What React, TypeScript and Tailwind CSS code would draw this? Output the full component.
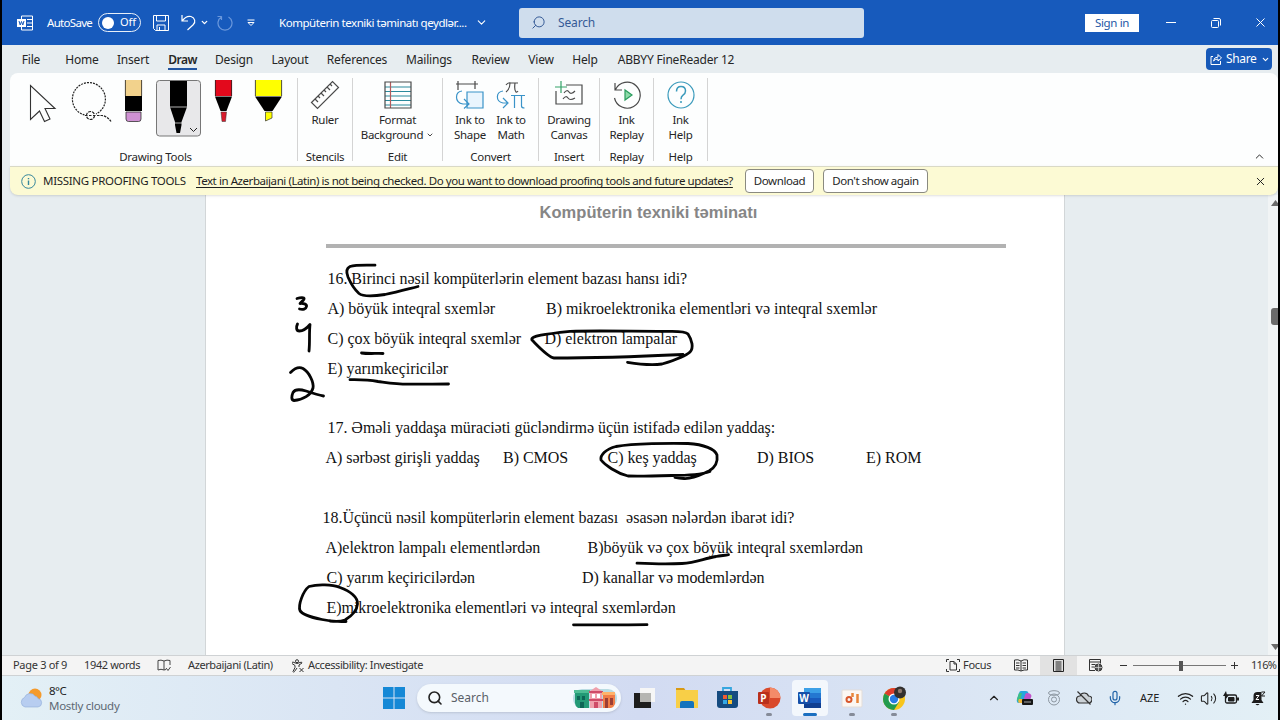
import type { ReactNode } from "react";
import { ChevronDown, ChevronUp, Mic, Search, Volume2, Wifi, X } from "lucide-react";

const TABS = [
  { label: "File", box: "w-[42px]" },
  { label: "Home", box: "w-[60px]" },
  { label: "Insert", box: "w-[42px]" },
  { label: "Draw", box: "w-[57px]", active: true },
  { label: "Design", box: "w-[46px]" },
  { label: "Layout", box: "w-[66px]" },
  { label: "References", box: "w-[68px]" },
  { label: "Mailings", box: "w-[76px]" },
  { label: "Review", box: "w-[47px]" },
  { label: "View", box: "w-[54px]" },
  { label: "Help", box: "w-[34px]" },
  { label: "ABBYY FineReader 12", box: "w-[148px]" },
];

// pen strokes, in window coordinates
const INK = [
  "M375 265.200C366 265 356 264.600 350 266.500C346 268.500 346 272 348 277C351 284 354 289 359 293.500C363 296.500 375 296 385 294.500C398 292 408 289 418 286.500",
  "M297 298.500C300 297.500 305 297 304 299C303 301 300 303 300 303.500C303 303 307 304 306.500 306.500C306 309 303 310 299.500 309",
  "M297.500 324C296 327 296 331 299.500 331C304 331 307 328 310 324.500C309 333 310 342 309 351",
  "M290.500 372.500C294 369 299 366.500 303 368.500C309 372 314 382 313 388C311 395 303 400 294 400.500C291 400 291.500 396 293 392.500C295 389 301 389.500 306 391C312 393 318 395 323.500 396",
  "M361.500 353C368 354 376 353.200 383 353.500",
  "M350 379.700C360 379.500 370 380 378 381.500C386 382.500 396 384.200 408 384.200C422 384.200 436 384.200 448.500 384",
  "M683 354.500C650 356 600 358 554 358C548 357 538 346 532 340C530 336 545 334 570 331.300C600 330.500 640 331.500 672 331.300C680 331.300 686 332 688 334C692 340 694 348 690 352C685 357 672 361 662 364C650 365.500 638 364 627.500 362.300",
  "M710 471.500C700 475 686 475.500 672 475.500C655 476 638 476.500 628 476C616 473 605 465 601 460C600 455 606 449 616 446.500C634 443.500 670 443 688 443.500C704 444.500 715 449 717 455C718 462 716 467 709 471C701 474.500 694 479 684 478.500C680 478.500 677 478 675 477.500",
  "M637 563.200C650 563.800 665 564.500 682 563.500C696 562.500 704 558.500 716 556.500C721 555.500 725 555.500 728.500 554.700",
  "M346 621.500C338 621.800 330 621.500 322 619.500C312 617.500 302 614.500 300 610.500C298 605 303 591 309 586.500C318 584 332 584.500 340 587.500C350 591 358 597 357.500 604C357 611 350 617 345 620C340 622 334 621.500 330 621",
  "M573.500 624.800C598 625.200 624 624.800 647 624.700",
];

function Group({ label, box, children }: { label: string; box: string; children: ReactNode }) {
  return (
    <div className={`${box} mt-[5px] flex h-[83px] shrink-0 flex-col border-r border-[#d4d4d4]`}>
      <div className="flex h-[70px] shrink-0 justify-center pt-[2px]">{children}</div>
      <div className="text-center text-[11.5px] leading-[17px] tracking-[-0.3px]">{label}</div>
    </div>
  );
}

function Tool({ lines, box, children }: { lines: string[]; box: string; children: ReactNode }) {
  return (
    <div className={`${box} flex flex-col items-center text-center text-[11.5px] leading-[15px] tracking-[-0.3px]`}>
      <svg width="30" height="30" viewBox="0 0 30 30" fill="none" stroke="#4a4a4a" strokeWidth="1.2" className="mb-[2px] shrink-0">
        {children}
      </svg>
      {lines.map((line) => (
        <div key={line} className="flex items-center whitespace-nowrap">
          {line}
          {line === "Background" && <ChevronDown size={8} strokeWidth={2.5} className="ml-[3px]" />}
        </div>
      ))}
    </div>
  );
}

function TitleBar() {
  return (
    <div className="flex h-[45px] shrink-0 items-center bg-[#175abc] text-white">
      <svg width="16" height="16" viewBox="0 0 16 16" fill="none" stroke="#fff" className="ml-[15px]">
        <path d="M4.500 4V1h11v14h-11v-3M10 4.500h5M10 8h5M10 11.500h5" />
        <path d="M0 4h9v8H0z" fill="#fff" stroke="none" />
        <path d="M2 6l1.200 4L4.500 6.500L5.800 10L7 6" stroke="#175abc" />
      </svg>
      <span className="ml-[14px] w-[51px] text-[11.5px] tracking-[-0.7px]">AutoSave</span>
      <div className="flex h-[19px] w-[43px] items-center rounded-full border border-white/90 pl-[3px]">
        <div className="h-3 w-3 rounded-full bg-white" />
        <span className="ml-[6px] text-[11px]">Off</span>
      </div>
      <svg width="16" height="16" viewBox="0 0 16 16" fill="none" stroke="#fff" className="ml-3">
        <path d="M.500.500h15v15h-13l-2-2zM3.500.500v5.500h9V.500M4 15.500V10h8v5.500M6.500 12v3.500" />
      </svg>
      <svg width="15" height="17" viewBox="0 0 15 17" fill="none" stroke="#fff" strokeWidth="1.200" className="ml-3">
        <path d="M1 1v6h6M1.200 6.800C4 3 7 1.800 10 2.500c4 1.200 5 5.500 2.200 8.200L6.500 16" />
      </svg>
      <ChevronDown size={9} className="ml-1" strokeWidth={3.500} />
      <svg width="16" height="16" viewBox="0 0 16 16" fill="none" stroke="#6b98dc" strokeWidth="1.200" className="ml-2">
        <path d="M4.500 1.500H.500M4.500 5V1.200M4.500 2A7 7 0 1 0 11.500 2" />
      </svg>
      <svg width="8" height="8" viewBox="0 0 8 8" fill="none" stroke="#fff" className="ml-[14px]">
        <path d="M.500 1h7M1 3.500l3 3l3-3z" />
      </svg>
      <span className="ml-6 w-[190px] whitespace-nowrap text-[11.5px] tracking-[-0.45px]">Kompüterin texniki təminatı qeydlər....</span>
      <ChevronDown size={13} className="ml-[6px]" strokeWidth={2} />
      <div className="ml-[31px] flex h-[30px] w-[345px] items-center rounded-[3px] bg-[#cfdded] text-[#355a96]">
        <Search size={15} strokeWidth={1.6} className="ml-3 -scale-x-100" />
        <span className="ml-3 text-[12px] tracking-[-0.15px]">Search</span>
      </div>
      <div className="ml-[221px] h-[18px] w-[54px] bg-white text-center text-[11.5px] leading-[18px] tracking-[-0.35px] text-[#2457a5]">Sign in</div>
      <div className="ml-[27px] h-px w-[10px] bg-white" />
      <svg width="10" height="10" viewBox="0 0 10 10" fill="none" stroke="#fff" className="ml-[35px]">
        <rect x=".5" y="2.500" width="7" height="7" rx="1" />
        <path d="M2.500.500H8Q9.500.500 9.500 2v5.500" />
      </svg>
      <X size={15} className="ml-[32px]" strokeWidth={1.600} />
    </div>
  );
}

function DrawingTools() {
  return (
    <svg width="286" height="66" viewBox="12 75 286 66" fill="none" className="shrink-0">
      <path d="M30.500 85.500v34l9-8.500l5 10.500l5.500-2.500l-5-10.500h10z" stroke="#333" strokeWidth="1.100" />
      <g stroke="#222" strokeWidth="1.200">
        <path d="M84.500 115a16.500 16.500 0 1 1 11.500 -1" strokeDasharray="2 1" />
        <circle cx="90.500" cy="115.500" r="4" strokeDasharray="3 1" />
        <path d="M85 115.500h3M89 115.500h3M93 115.500h3M97 115.500h5q5 .5 9 6" strokeDasharray="2.500 1" />
      </g>
      <path d="M125 80h17v16h-17z" fill="#f2d28c" />
      <path d="M125 96h17v15h-17z" fill="#000" />
      <path d="M126 112h15v7q0 2.500-2.500 2.500h-10q-2.500 0-2.500-2.500z" fill="#cf92d3" stroke="#333" strokeWidth=".8" />
      <path d="M125.400 80v16M141.600 80v16" stroke="#222" strokeWidth=".8" />
      <rect x="156.500" y="80.500" width="44" height="55.500" rx="3" fill="#e8e8ea" stroke="#777" />
      <path d="M170 81h17v26l-5.500 15v3l-1.500 8h-3.500l-1.500-8v-3L170 107z" fill="#000" />
      <path d="M170 107h17M175 123h7" stroke="#ddd" strokeWidth=".8" />
      <path d="M190 128l3.500 3.500l3.500-3.500" stroke="#222" />
      <path d="M215 80h17v16h-17z" fill="#e3091c" />
      <path d="M215 96.500h17L226.500 111h-6z" fill="#000" />
      <path d="M221 112h5.500l-1 9.500h-3.500z" fill="#d81b2c" stroke="#333" strokeWidth=".5" />
      <path d="M255.500 80h26v16h-26z" fill="#ff0" />
      <path d="M255 96.500h27l-9.500 14.500h-8z" fill="#000" />
      <path d="M265.500 112h6.500v6l-6.500 3z" fill="#ff0" stroke="#333" strokeWidth=".7" />
      <path d="M215.400 80v16M231.600 80v16M255.400 80v16M281.600 80v16" stroke="#222" strokeWidth=".8" />
    </svg>
  );
}

function Ribbon() {
  return (
    <div className="ml-2 flex h-[93px] shrink-0 rounded-t-lg bg-[#fdfefe]">
      <Group label="Drawing Tools" box="w-[288px] pl-[4px]">
        <div className="-mt-[5px] -ml-[4px] w-full"><DrawingTools /></div>
      </Group>
      <Group label="Stencils" box="w-[55px]">
        <Tool lines={["Ruler"]} box="w-[50px]">
          <path d="M1.500 22.500L22.500 1.500l6 6l-21 21z" />
          <path d="M5 19l3 3M8 16l2 2M11 13l3 3M14 10l2 2M17 7l3 3M20 4l2 2" />
        </Tool>
      </Group>
      <Group label="Edit" box="w-[90px]">
        <Tool lines={["Format", "Background"]} box="w-[86px]">
          <path d="M2 7h26M2 11.500h26M2 16h26M2 20.500h26M2 25h26" stroke="#2b8a9c" />
          <path d="M7.500 2v26" stroke="#b25b5b" />
          <path d="M2 2h26v26H2z" />
        </Tool>
      </Group>
      <Group label="Convert" box="w-[96px]">
        <Tool lines={["Ink to", "Shape"]} box="w-[41px]">
          <path d="M3 1v9M20 1v8M1 4h22" />
          <path d="M12 12h16v16H12z" fill="#eaf5fd" stroke="#3a93c8" />
          <path d="M7 11c-7 1-8 11 1 13h5M9 19l5 5l-5 4.500" stroke="#3a93c8" />
        </Tool>
        <Tool lines={["Ink to", "Math"]} box="w-[41px]">
          <path d="M10 5q2-3 5-2h7M14 3q0 6-4 9M19 3q-1 7 1 9q1 .5 2-1" />
          <path d="M15 15.500h14M18.500 15.500V28M25.500 15.500V26q0 2 3 2" stroke="#3a93c8" />
          <path d="M7 11c-7 1-8 10 0 12h4M7 18l5 5l-5 5" stroke="#3a93c8" />
        </Tool>
      </Group>
      <Group label="Insert" box="w-[61px]">
        <Tool lines={["Drawing", "Canvas"]} box="w-[50px]">
          <path d="M12 5h16v19H2V11" />
          <path d="M1 7h12M7 1v12" stroke="#35a268" />
          <path d="M10 13q3-4 5-1t6-1M9 19q3-4 5-1t7 0" />
        </Tool>
      </Group>
      <Group label="Replay" box="w-[54px]">
        <Tool lines={["Ink", "Replay"]} box="w-[45px]">
          <path d="M3 3v7h7M3.500 9.500A13 13 0 1 1 2.500 18" />
          <path d="M13 10v10l7-5z" fill="#8ddba9" stroke="#2a9c5d" />
        </Tool>
      </Group>
      <Group label="Help" box="w-[54px]">
        <Tool lines={["Ink", "Help"]} box="w-[45px]">
          <circle cx="15" cy="15" r="13" stroke="#3a9abb" />
          <path d="M10.500 11.500q0-5 4.500-5t4.500 4.500q0 2.500-2.500 4.200q-2 1.300-2 4M15 21v2" stroke="#3a9abb" strokeWidth="1.500" />
        </Tool>
      </Group>
      <div className="flex flex-1 items-end justify-end pr-3 pb-[3px]">
        <ChevronUp size={13} strokeWidth={1.800} />
      </div>
    </div>
  );
}

function MessageBar() {
  return (
    <div className="z-10 ml-2 flex h-[29px] shrink-0 items-center rounded-b-lg border-t border-[#d9d9c6] bg-[#fcfad4] text-[11.5px] text-[#1f1f1f] shadow-sm">
      <svg width="15" height="15" viewBox="0 0 15 15" fill="none" stroke="#35869c" className="ml-[11px]">
        <circle cx="7.500" cy="7.500" r="6.800" />
        <path d="M7.500 6.500V11M7.500 4v1.300" strokeWidth="1.400" />
      </svg>
      <span className="ml-[7px] w-[153px] whitespace-nowrap tracking-[-0.3px]">MISSING PROOFING TOOLS</span>
      <span className="w-[549px] whitespace-nowrap tracking-[-0.435px] underline underline-offset-2">
        Text in Azerbaijani (Latin) is not being checked. Do you want to download proofing tools and future updates?
      </span>
      <div className="h-6 w-[69px] shrink-0 rounded border border-[#8a8a80] bg-white text-center leading-[22px] tracking-[-0.4px]">Download</div>
      <div className="ml-[9px] h-6 w-[105px] rounded border border-[#8a8a80] bg-white text-center leading-[22px] tracking-[-0.45px]">Don't show again</div>
      <X size={13} strokeWidth={1.800} className="mr-[11px] ml-auto" />
    </div>
  );
}

function Row({ pad, children }: { pad: string; children: ReactNode }) {
  return <div className={`${pad} flex h-[30px] items-center whitespace-nowrap`}>{children}</div>;
}

function Document() {
  return (
    <div className="relative flex h-[460px] shrink-0 overflow-hidden">
      <div className="w-[203px] shrink-0" />
      <div className="w-[860px] shrink-0 border-x border-[#d2d6d8] bg-white font-['Liberation_Serif',serif] text-[16px] tracking-[-0.035px] text-[#111]">
        <div className="flex h-[49px] justify-center pt-[6px] pl-[27px] font-['Liberation_Sans',sans-serif] text-[16.5px] leading-[22px] font-bold tracking-[0.02px] text-[#868686]">
          Kompüterin texniki təminatı
        </div>
        <div className="ml-[120px] h-[4px] w-[680px] bg-[#b2b2b2]" />
        <div className="pt-[16px]">
          <Row pad="pl-[121.5px]">16. Birinci nəsil kompüterlərin element bazası hansı idi?</Row>
          <Row pad="pl-[121.5px]">
            <span className="w-[218.5px]">A) böyük inteqral sxemlər</span>
            <span>B) mikroelektronika elementləri və inteqral sxemlər</span>
          </Row>
          <Row pad="pl-[121.5px]">
            <span className="w-[217px]">C) çox böyük inteqral sxemlər</span>
            <span>D) elektron lampalar</span>
          </Row>
          <Row pad="pl-[121.5px]">E) yarımkeçiricilər</Row>
        </div>
        <div className="pt-[29px]">
          <Row pad="pl-[121.5px]">17. Əməli yaddaşa müraciəti gücləndirmə üçün istifadə edilən yaddaş:</Row>
          <Row pad="pl-[119.5px]">
            <span className="w-[177.5px]">A) sərbəst girişli yaddaş</span>
            <span className="w-[104.5px]">B) CMOS</span>
            <span className="w-[149.5px]">C) keş yaddaş</span>
            <span className="w-[109px]">D) BIOS</span>
            <span>E) ROM</span>
          </Row>
        </div>
        <div className="pt-[30px]">
          <Row pad="pl-[116.5px]">18.Üçüncü nəsil kompüterlərin element bazası &nbsp;əsasən nələrdən ibarət idi?</Row>
          <Row pad="pl-[119.5px]">
            <span className="w-[262px]">A)elektron lampalı elementlərdən</span>
            <span>B)böyük və çox böyük inteqral sxemlərdən</span>
          </Row>
          <Row pad="pl-[120.5px]">
            <span className="w-[255.5px]">C) yarım keçiricilərdən</span>
            <span>D) kanallar və modemlərdən</span>
          </Row>
          <Row pad="pl-[120.5px]">E)mikroelektronika elementləri və inteqral sxemlərdən</Row>
        </div>
      </div>
      <svg viewBox="2 195 1276 460" className="absolute inset-0 h-[460px] w-[1276px]" fill="none" stroke="#050505" strokeWidth="2.800" strokeLinecap="round" strokeLinejoin="round">
        {INK.map((d) => <path key={d} d={d} />)}
      </svg>
      <div className="relative ml-auto w-[10px] bg-[#f1f4f5]">
        <svg width="10" height="460" viewBox="0 0 10 460" fill="#6b6b6b">
          <path d="M3 11l4.500-6l4.500 6zM3 449l4.500 6l4.500-6z" />
          <rect x="3" y="113" width="9" height="17" rx="3" />
        </svg>
      </div>
    </div>
  );
}

function StatusBar() {
  return (
    <div className="flex h-[21px] shrink-0 items-center border-y border-[#cfd2d4] bg-[#f4f4f4] text-[11px] whitespace-nowrap text-[#333]">
      <span className="ml-[11px] w-[71px] tracking-[-0.3px]">Page 3 of 9</span>
      <span className="w-[73px] tracking-[-0.35px]">1942 words</span>
      <svg width="14" height="13" viewBox="0 0 14 13" fill="none" stroke="#444">
        <path d="M7 2v9M7 11Q4 9.500 1 11V1.500Q4 .5 7 2Q10 .5 13 1.500V6M7 11l2-.5M9 9l2 2.500L13.500 8" />
      </svg>
      <span className="ml-[17px] w-[103px] tracking-[-0.4px]">Azerbaijani (Latin)</span>
      <svg width="14" height="14" viewBox="0 0 14 14" fill="none" stroke="#333">
        <circle cx="6" cy="2.200" r="1.500" />
        <path d="M1 3.500q1-1 2 0l3 1l3-1q2-1 2 .5l-3 2v2M1 4.500l3 2v2l-2 4q.5 1.500 1.500 0L6 9M8.500 9l4 4M12.500 9l-4 4" />
      </svg>
      <span className="ml-[3px] tracking-[-0.4px]">Accessibility: Investigate</span>
      <div className="ml-auto flex h-full items-center">
        <svg width="14" height="13" viewBox="0 0 14 13" fill="none" stroke="#333">
          <path d="M.5 3V.5H3M11 .5h2.500V3M.5 10v2.500H3M11 12.500h2.500V10M4 2.500h4l2.500 2.500v6H4zM8 2.500V5h2.500" />
        </svg>
        <span className="ml-[3px] w-[46px] tracking-[-0.3px]">Focus</span>
        <svg width="14" height="13" viewBox="0 0 14 13" fill="none" stroke="#333" className="mx-[5px]">
          <path d="M7 2v10M7 2Q4 0 .5 1v10Q4 10.500 7 12Q10 10.500 13.500 11V1Q10 0 7 2M2 4h3.500M2 6.500h3.500M2 9h3.500M8.500 4H12M8.500 6.500H12M8.500 9H12" />
        </svg>
        <div className="ml-[7px] flex h-full w-[37px] items-center justify-center bg-[#e2e2e2]">
          <svg width="11" height="13" viewBox="0 0 11 13" fill="none" stroke="#222">
            <path d="M.5.5h10v12H.5zM2.500 3h6M2.500 5h6M2.500 7h6M2.500 9h6M2.500 11h6" />
          </svg>
        </div>
        <svg width="14" height="13" viewBox="0 0 14 13" fill="none" stroke="#333" className="ml-3">
          <path d="M6 11.500H.5V.5h11v4M.5 3h11M2.500 5.500h4M2.500 8h3" />
          <circle cx="9.500" cy="8.500" r="3.500" fill="#555" />
          <path d="M6 8.500h7M9.500 5v7" stroke="#ddd" strokeWidth=".7" />
        </svg>
        <div className="ml-[17px] h-px w-[7px] bg-[#333]" />
        <div className="relative ml-[6px] flex h-[12px] w-[93px] items-center">
          <div className="h-px w-full bg-[#777]" />
          <div className="absolute left-[46px] h-[10px] w-[4px] bg-[#555]" />
        </div>
        <svg width="7" height="7" viewBox="0 0 7 7" stroke="#333" className="ml-[5px]">
          <path d="M0 3.500h7M3.500 0v7" />
        </svg>
        <span className="mr-[2px] ml-[13px] w-[25px] tracking-[-0.7px]">116%</span>
      </div>
    </div>
  );
}

function TaskIcon({ box, dot, children }: { box: string; dot?: string; children: ReactNode }) {
  return (
    <div className={`${box} flex h-[36px] flex-col items-center justify-between rounded pt-[6px]`}>
      <svg width="24" height="24" viewBox="0 0 24 24">{children}</svg>
      <div className={`h-[3px] rounded-full ${dot ?? ""}`} />
    </div>
  );
}

function Taskbar() {
  return (
    <div className="flex h-[44px] shrink-0 items-center bg-linear-to-r from-[#e3f0f6] via-[#d2dbf2] to-[#e3f0f6] text-[11.5px] text-[#222]">
      <svg width="24" height="22" viewBox="0 0 24 22" className="ml-[17px]">
        <circle cx="16" cy="8" r="6.500" fill="#f49a2c" />
        <path d="M6 20a5 5 0 0 1-.5-9.500A6 6 0 0 1 16 9a4 4 0 0 1 3 2.500a4.300 4.300 0 0 1 0 8.500z" fill="#b7cdf0" stroke="#91add8" strokeWidth=".6" />
      </svg>
      <div className="ml-[6px] w-[334px] text-[11.5px] leading-[15px]">
        <div className="tracking-[-0.5px]">8°C</div>
        <div className="tracking-[-0.3px] text-[#5d6873]">Mostly cloudy</div>
      </div>
      <svg width="22" height="22" viewBox="0 0 22 22" fill="#1588d6">
        <path d="M0 0h10.500v10.500H0zM11.500 0H22v10.500H11.500zM0 11.500h10.500V22H0zM11.500 11.500H22V22H11.500z" />
      </svg>
      <div className="ml-[12px] flex h-[28px] w-[204px] items-center rounded-full bg-[#f4f9fd] shadow-sm">
        <Search size={16} strokeWidth={2.400} className="ml-[10px]" />
        <span className="ml-2 flex-1 text-[12px] text-[#5a6068]">Search</span>
        <svg width="44" height="24" viewBox="0 0 44 24" className="mr-[4px]">
          <rect x="0" y="3" width="44" height="19" rx="9" fill="#b9dce3" />
          <path d="M2 5h14v17H5q-3-2-3-5z" fill="#239a76" />
          <path d="M1 4h16v3H1z" fill="#4fbd95" />
          <path d="M4 10h3v4H4zM9 10h3v4H9zM7 16h4v6H7z" fill="#0d6656" />
          <path d="M17 5l6-4l6 4v17H17z" fill="#f0a0ac" />
          <path d="M16 5h14v2H16zM16 13h14v2H16zM21 16h4v6h-4z" fill="#cf4b67" />
          <path d="M19 8h3v4h-3zM24 8h3v4h-3z" fill="#fff" />
          <path d="M30 7h12v11q-1 3-4 4h-8z" fill="#f17e48" />
          <path d="M29 6h13v3H29z" fill="#ffb36b" />
          <path d="M32 12h3v10h-3zM37 12h3v7h-3z" fill="#9b3f35" />
        </svg>
      </div>
      <TaskIcon box="ml-[4px] w-[38px]">
        <path d="M8 2h15v14H8z" fill="#f6f6f6" />
        <path d="M2 7h17v15H2z" fill="#1d1d1d" />
        <path d="M8 7h11v9H8z" fill="#b5b5b2" />
      </TaskIcon>
      <TaskIcon box="ml-[5px] w-[38px]">
        <path d="M1 2h8l2 3H1z" fill="#d99a13" />
        <path d="M1 4h22v18H1z" fill="#f8cf47" />
        <path d="M5 22v-5q0-2 2-2h10q2 0 2 2v5z" fill="#1573bd" />
      </TaskIcon>
      <TaskIcon box="ml-[2px] w-[38px]">
        <path d="M8 6V2h8v4" fill="none" stroke="#36a6df" strokeWidth="1.800" />
        <path d="M2 5h21v14q0 3-3 3H5q-3 0-3-3z" fill="#154b80" />
        <path d="M8 9h4v4H8z" fill="#ef5b32" />
        <path d="M13 9h4v4h-4z" fill="#80c142" />
        <path d="M8 14h4v4H8z" fill="#33a8e5" />
        <path d="M13 14h4v4h-4z" fill="#fcc12d" />
      </TaskIcon>
      <TaskIcon box="ml-[4px] w-[38px]" dot="w-[6px] bg-[#858b98]">
        <circle cx="13" cy="12" r="10.500" fill="#d9492b" />
        <path d="M13 1.500a10.500 10.500 0 0 1 10.500 10.500H13z" fill="#f48b69" />
        <rect x="1" y="6" width="11" height="12" rx="1" fill="#b92f1c" />
        <text x="6.500" y="15.500" textAnchor="middle" fill="#fff" className="font-['Open_Sans',sans-serif] text-[10px] font-bold">P</text>
      </TaskIcon>
      <TaskIcon box="ml-[4px] w-[36px] bg-[#f3f7fc]" dot="w-[14px] bg-[#1b6fc0]">
        <path d="M6 2h17v5H6z" fill="#3ca0e7" />
        <path d="M6 7h17v5H6z" fill="#2478d1" />
        <path d="M6 12h17v5H6z" fill="#195bbd" />
        <path d="M6 17h17v5H6z" fill="#103f91" />
        <rect x="0" y="6" width="12" height="12" rx="1" fill="#1650a8" />
        <text x="6" y="15.500" textAnchor="middle" fill="#fff" className="font-['Open_Sans',sans-serif] text-[10px] font-bold">W</text>
      </TaskIcon>
      <TaskIcon box="ml-[6px] w-[36px]" dot="w-[6px] bg-[#858b98]">
        <rect x="2" y="4" width="20" height="17" rx="1" fill="#fbf7f3" stroke="#e3ddd9" />
        <circle cx="9" cy="13.500" r="2.500" fill="none" stroke="#d8572c" strokeWidth="2" />
        <path d="M12.500 7v4M17.500 8v9" stroke="#e8853a" strokeWidth="2.500" fill="none" />
      </TaskIcon>
      <TaskIcon box="ml-[6px] w-[36px]" dot="w-[6px] bg-[#858b98]">
        <circle cx="12" cy="13" r="11" fill="#f8c51c" />
        <path d="M12 13L2.500 7.500A11 11 0 0 1 21.500 7.500z" fill="#dc3c2d" />
        <path d="M12 13L2.500 7.500A11 11 0 0 0 12 24l5-8z" fill="#229b4f" />
        <circle cx="12" cy="13" r="5.500" fill="#fff" />
        <circle cx="12" cy="13" r="4.200" fill="#287ce6" />
        <circle cx="18" cy="6.500" r="6" fill="#33302e" />
        <circle cx="18" cy="5" r="2.200" fill="#8c776c" />
      </TaskIcon>
      <div className="mr-[12px] ml-auto flex items-center">
        <ChevronUp size={14} strokeWidth={2} />
        <svg width="17" height="16" viewBox="0 0 17 16" className="ml-[15px]">
          <path d="M5 1h5q2 0 2.500 2L10 10q-1 3-3 3H3q-3 0-2-4l2-6q.5-2 2-2z" fill="#27a7dc" />
          <path d="M1 9l2-6h3L4 12q-3 0-3-3z" fill="#3fbf84" />
          <path d="M11 3q4 0 4.500 3l-2 6H7l2-7q.5-2 2-2z" fill="#c153ca" />
          <path d="M3 9h5l-1 4H4q-3 0-1-4z" fill="#f2b73b" />
          <rect x="6" y="9" width="11" height="6" rx="1" fill="#171717" />
          <path d="M8 12h7" stroke="#aaa" />
        </svg>
        <svg width="14" height="16" viewBox="0 0 14 16" fill="none" stroke="#8c96a0" className="ml-[14px]">
          <ellipse cx="7" cy="3" rx="5.500" ry="2.300" />
          <circle cx="7" cy="9.500" r="5.500" />
          <circle cx="7" cy="9.500" r="2.500" />
        </svg>
        <svg width="16" height="14" viewBox="0 0 16 14" fill="none" stroke="#333" strokeWidth="1.200" className="ml-[15px]">
          <path d="M4 12a3.500 3.500 0 0 1 0-7a4.500 4.500 0 0 1 8.500 0a3.500 3.500 0 0 1 0 7zM1.500.5l13 13" fill="#cbd1d6" />
        </svg>
        <Mic size={16} strokeWidth={1.800} className="ml-[15px] text-[#2264a8]" />
        <span className="ml-[17px] w-[37px] text-[11px]">AZE</span>
        <Wifi size={17} strokeWidth={1.800} />
        <Volume2 size={17} strokeWidth={1.500} className="ml-[6px]" />
        <svg width="17" height="14" viewBox="0 0 17 14" fill="none" stroke="#1d1d1d" className="ml-[6px]">
          <rect x="2.500" y="4" width="11" height="8" rx="1.500" strokeWidth="1.300" />
          <path d="M5.500 6.500h5.500v3.500H5.500z" fill="#1d1d1d" />
          <path d="M15 6.500v3" strokeWidth="2" />
          <path d="M3 0L0 5h2v4l4-5H4z" fill="#1d1d1d" stroke="none" />
        </svg>
        <svg width="15" height="15" viewBox="0 0 15 15" className="ml-[11px]">
          <path d="M6.500 1q-4 0-4 4v4L.500 12h12l-2-3V1zM4.500 13h4q-2 2.500-4 0z" fill="#1d1d1d" />
          <path d="M10.500 1h3.500l-3.500 4h3.500" fill="none" stroke="#1d1d1d" />
          <path d="M5 4.500h3l-3 4h3" fill="none" stroke="#fff" />
        </svg>
      </div>
    </div>
  );
}

export default function App() {
  return (
    <div className="flex h-[720px] w-[1280px] flex-col overflow-hidden border-x-2 border-black bg-[#e7edf0] font-['Noto_Sans','Open_Sans',sans-serif] text-[#262626]">
      <TitleBar />
      <div className="flex h-[28px] shrink-0 items-center pt-px pl-2 text-[12px] tracking-[-0.2px]">
        {TABS.map((tab) => (
          <div key={tab.label} className={`${tab.box} flex shrink-0 justify-center whitespace-nowrap`}>
            <span className={tab.active ? "relative font-semibold tracking-[-0.5px] after:absolute after:inset-x-0 after:-bottom-px after:h-[2px] after:bg-[#2356a0]" : ""}>
              {tab.label}
            </span>
          </div>
        ))}
        <div className="-mt-px mr-[6px] ml-auto flex h-[22px] w-[66px] items-center rounded bg-[#1759b8] pl-1 text-white">
          <svg width="12" height="12" viewBox="0 0 12 12" fill="none" stroke="#fff">
            <path d="M3 3.500H1v8h9.500V8M3.500 8Q4 4 8 4V1.500L11.500 5L8 8V6Q5 6 3.500 8z" />
          </svg>
          <span className="ml-[4px] w-[35px] tracking-[-0.35px]">Share</span>
          <ChevronDown size={9} strokeWidth={3} />
        </div>
      </div>
      <Ribbon />
      <MessageBar />
      <Document />
      <StatusBar />
      <Taskbar />
    </div>
  );
}
